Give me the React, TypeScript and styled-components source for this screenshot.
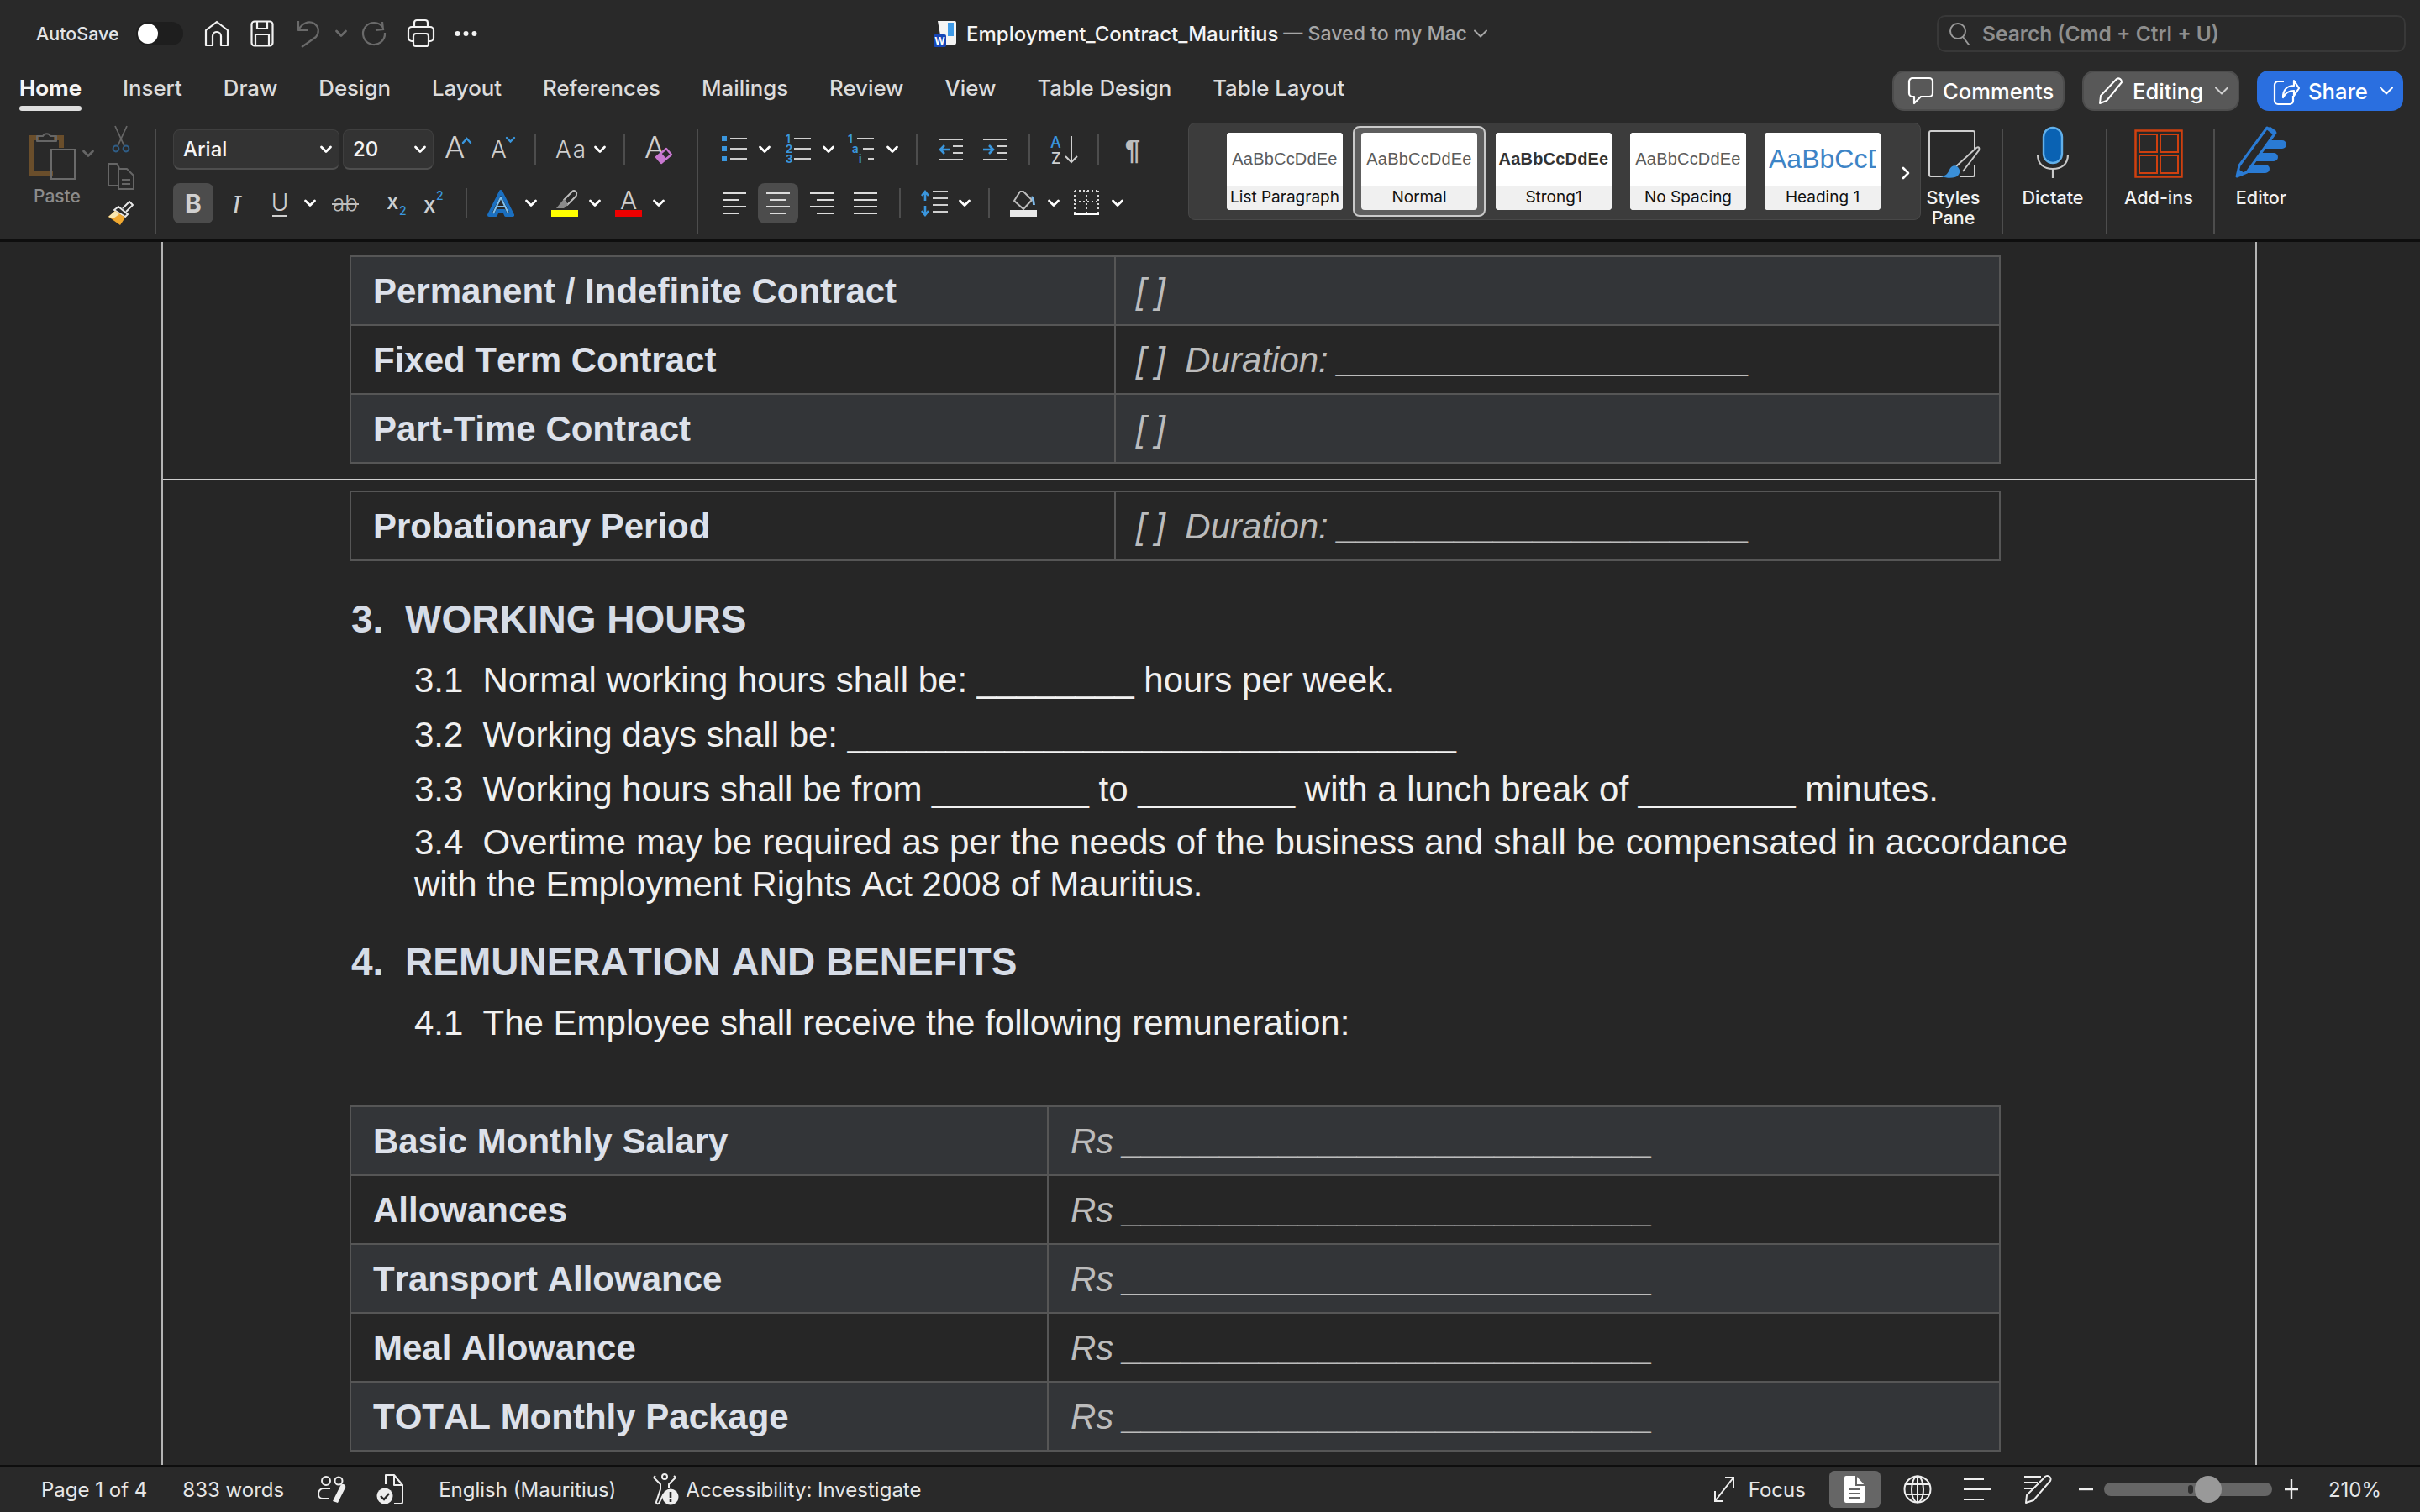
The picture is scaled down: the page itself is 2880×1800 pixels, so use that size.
import React from "react";
import styled, { createGlobalStyle } from "styled-components";

const Global = createGlobalStyle`
  html, body { margin: 0; padding: 0; background: #262626; width: 2880px; height: 1800px; overflow: hidden; }
  * { box-sizing: border-box; }
  #root { width: 2880px; height: 1800px; }
`;

const UI = `Inter, "Noto Sans", sans-serif`;
const DOC = `"Liberation Sans", Arial, sans-serif`;
const BLUE = "#3a96dd";
const ICON = "#cfcfcf";

const Shell = styled.div`
  width: 2880px; height: 1800px; display: flex; flex-direction: column;
  background: #262626; font-family: ${UI}; color: #f0f0f0; overflow: hidden;
`;
const Header = styled.header`
  height: 288px; flex: none; background: #292929; border-bottom: 4px solid #0e0e0e;
`;
const TitleBar = styled.div`
  height: 84px; display: flex; align-items: flex-start;
`;
const QuickBar = styled.div`
  width: 1111px; height: 80px; padding-left: 43px; display: flex; align-items: center; flex: none;
`;
const AutoSave = styled.span`
  font-size: 21.5px; font-weight: 500; color: #e4e4e4; width: 100px; white-space: nowrap;
`;
const Toggle = styled.span`
  width: 56px; height: 28px; margin-left: 19px; border-radius: 14px; background: #1e1e1e; position: relative; display: block; flex: none;
  &::before { content: ""; position: absolute; left: 2px; top: 2px; width: 24px; height: 24px; border-radius: 50%; background: #fff; }
`;
const Spot = styled.span<{ $ml?: number; $mt?: number }>`
  display: flex; align-items: center; justify-content: center; flex: none;
  margin-left: ${(p) => p.$ml ?? 0}px; margin-top: ${(p) => p.$mt ?? 0}px;
  align-self: ${(p) => (p.$mt ? "flex-start" : "auto")};
`;
const DocTitle = styled.div`
  height: 80px; width: 1194px; flex: none; display: flex; align-items: center;
`;
const TitleName = styled.span`
  margin-left: 11px; font-size: 24px; font-weight: 500; color: #f4f4f4; white-space: nowrap;
`;
const TitleState = styled.span`
  font-size: 23.1px; font-weight: 500; color: #a6a6a6; white-space: nowrap; margin-left: 6px;
`;
const Search = styled.div`
  width: 558px; height: 44px; margin-top: 18px; border: 2px solid #383838; border-radius: 10px;
  display: flex; align-items: center; padding-left: 12px; flex: none;
`;
const SearchText = styled.span`
  margin-left: 14px; font-size: 24.5px; font-weight: 600; color: #8e8e8e; white-space: nowrap;
`;
const TabBar = styled.div`
  height: 62px; display: flex; justify-content: space-between; padding: 0 20px 0 23px;
`;
const Tabs = styled.nav`
  display: flex; gap: 49px; align-items: flex-start;
`;
const Tab = styled.span<{ $on?: boolean }>`
  position: relative; flex: none; height: 48px; line-height: 42px; font-size: 25.8px; white-space: nowrap;
  font-weight: ${(p) => (p.$on ? 700 : 500)}; color: ${(p) => (p.$on ? "#f5f5f5" : "#dcdcdc")};
  &::after {
    content: ""; display: ${(p) => (p.$on ? "block" : "none")}; position: absolute; left: 0; right: 0; bottom: 0;
    height: 6px; border-radius: 3px; background: #dedede;
  }
`;
const Actions = styled.div`
  display: flex; gap: 21px; align-items: flex-start;
`;
const Action = styled.button<{ $w: number; $primary?: boolean }>`
  width: ${(p) => p.$w}px; height: 48px; border-radius: 14px; padding: 0 0 0 ${(p) => (p.$primary ? 17 : 16)}px;
  border: 2px solid ${(p) => (p.$primary ? "#2a6fe0" : "#4d4d4d")};
  background: ${(p) => (p.$primary ? "#2a6fe0" : "#585858")};
  color: #fff; font: 500 25.6px ${UI}; display: flex; align-items: center; gap: 10px; white-space: nowrap;
`;
const ActionLabel = styled.span`
  margin-right: 4px;
`;
const Ribbon = styled.div`
  height: 138px; display: flex; align-items: flex-start;
`;
const ClipGroup = styled.div`
  width: 184px; flex: none; height: 138px; display: flex; padding-left: 34px;
`;
const PasteCol = styled.div`
  width: 58px; display: flex; flex-direction: column; align-items: flex-start; flex: none; padding-top: 8px;
`;
const PasteLabel = styled.span`
  font-size: 21px; font-weight: 500; color: #8c8c8c; margin: 5px 0 0 6px; line-height: 26px;
`;
const ClipTools = styled.div`
  margin-left: 16px; display: flex; flex-direction: column; align-items: center; width: 32px; flex: none; padding-top: 4px; gap: 12px;
`;
const RibbonRule = styled.div<{ $ml?: number }>`
  width: 2px; height: 124px; margin-top: 8px; background: #4d4d4d; flex: none; margin-left: ${(p) => p.$ml ?? 0}px;
`;
const Group = styled.div<{ $w: number; $pl: number }>`
  width: ${(p) => p.$w}px; padding: 8px 0 0 ${(p) => p.$pl}px; flex: none; display: flex; flex-direction: column; gap: 16px;
`;
const ToolRow = styled.div`
  display: flex; height: 48px; align-items: center;
`;
const Select = styled.div<{ $w: number; $ml?: number }>`
  width: ${(p) => p.$w}px; height: 48px; margin-left: ${(p) => p.$ml ?? 0}px; border-radius: 8px; background: #333333; flex: none;
  border: 1px solid #3f3f3f; border-bottom: 2px solid #4e4e4e; display: flex; align-items: center; justify-content: space-between;
  padding: 0 8px 0 11px; font-size: 24px; font-weight: 500; color: #f5f5f5;
`;
const Slot = styled.div<{ $w: number }>`
  width: ${(p) => p.$w}px; height: 48px; display: flex; align-items: center; justify-content: center; flex: none;
`;
const Pressed = styled.div`
  width: 48px; height: 48px; border-radius: 8px; background: #4c4c4c; display: flex; align-items: center; justify-content: center;
`;
const MiniRule = styled.div`
  width: 2px; height: 36px; background: #4d4d4d;
`;
const Gallery = styled.div`
  width: 872px; height: 116px; flex: none; background: #3c3c3c; border: 1px solid #484848; border-radius: 8px;
  margin-left: 21px; padding: 11px 0 0 45px; display: flex; gap: 22px; align-items: flex-start;
`;
const StyleCard = styled.div<{ $on?: boolean }>`
  width: 138px; height: 92px; border-radius: 4px; background: #fff; position: relative; flex: none; overflow: visible;
  display: flex; flex-direction: column; color: #111;
  &::before {
    content: ""; display: ${(p) => (p.$on ? "block" : "none")}; position: absolute; left: -10px; right: -10px; top: -8px; bottom: -8px;
    border: 2px solid #c9c9c9; border-radius: 8px; background: #5e5e5e; z-index: 0;
  }
`;
const Preview = styled.div<{ $big?: boolean; $bold?: boolean }>`
  position: relative; z-index: 1; height: 64px; background: #fff; border-radius: 4px 4px 0 0; display: flex; align-items: center; overflow: hidden;
  padding: 0 ${(p) => (p.$big ? 5 : 0)}px 2px; text-align: ${(p) => (p.$big ? "left" : "center")};
  font-family: ${DOC}; white-space: nowrap;
  font-size: ${(p) => (p.$big ? 32 : 20)}px; letter-spacing: ${(p) => (p.$big ? 0 : 0.2)}px;
  font-weight: ${(p) => (p.$bold ? 700 : 400)}; color: ${(p) => (p.$big ? "#3d84c6" : p.$bold ? "#333" : "#5c5c5c")};
`;
const PreviewClip = styled.span`
  display: block; overflow: hidden; width: 100%;
`;
const StyleName = styled.div`
  position: relative; z-index: 1; height: 28px; padding-bottom: 4px; background: #f0f0f0; border-radius: 0 0 4px 4px; font-size: 19px; font-weight: 400;
  display: flex; align-items: center; justify-content: center; white-space: nowrap; color: #111;
`;
const GalleryMore = styled.span`
  margin: 40px 0 0 3px; display: block;
`;
const Tool = styled.div<{ $w: number }>`
  width: ${(p) => p.$w}px; flex: none; display: flex; flex-direction: column; align-items: center; padding-top: 6px;
`;
const ToolIcon = styled.div`
  height: 60px; display: flex; align-items: flex-end; justify-content: center;
`;
const ToolLabel = styled.div`
  margin-top: 11px; font-size: 21.6px; font-weight: 500; line-height: 24px; text-align: center; color: #f2f2f2;
`;

const DocArea = styled.main`
  flex: 1; min-height: 0; overflow: hidden; background: #262626;
`;
const Page = styled.article`
  margin-left: 192px; width: 2494px; height: 100%; border-left: 2px solid #b4b4b4; border-right: 2px solid #b4b4b4;
  font-family: ${DOC}; font-kerning: none; padding-top: 16px; overflow: hidden;
`;
const TableBox = styled.div<{ $mt?: number }>`
  margin: ${(p) => p.$mt ?? 0}px 0 0 222px; width: 1965px; border-top: 2px solid #565656; border-left: 2px solid #565656; border-right: 2px solid #565656;
`;
const Row = styled.div<{ $first: number; $shade?: boolean }>`
  display: grid; grid-template-columns: ${(p) => p.$first}px 1fr; height: 82px; border-bottom: 2px solid #565656;
  background: ${(p) => (p.$shade ? "#333538" : "#262626")}; align-items: stretch;
`;
const LabelCell = styled.div`
  border-right: 2px solid #565656; font-size: 42px; font-weight: 700; color: #dde1ea; padding: 2px 0 0 26px; display: flex; align-items: center;
  white-space: nowrap;
`;
const ValueCell = styled.div<{ $pl: number }>`
  font-size: 42px; font-style: italic; color: #bcbcbc; padding: 2px 0 0 ${(p) => p.$pl}px; display: flex; align-items: center; white-space: pre;
`;
const PageBreak = styled.div`
  height: 2px; background: #cfcfcf; margin: 18px 0 12px;
`;
const Heading = styled.h2<{ $mt: number }>`
  margin: ${(p) => p.$mt}px 0 0 224px; font-size: 46px; line-height: 52px; font-weight: 700; color: #d6dce6; white-space: nowrap;
`;
const HeadNum = styled.span`
  display: inline-block; width: 64px;
`;
const Para = styled.p<{ $mt: number }>`
  margin: ${(p) => p.$mt}px 0 0 299px; width: 1968px; font-size: 42px; line-height: 50px; color: #f0f0f0; text-align: justify;
`;
const ParaNum = styled.span`
  display: inline-block; width: 81.5px;
`;
const StatusBar = styled.footer`
  height: 56px; flex: none; background: #292929; border-top: 2px solid #0e0e0e; display: flex; align-items: center; font-size: 24px; color: #e6e6e6;
  padding-right: 46px;
`;
const StatusText = styled.span<{ $ml: number }>`
  margin-left: ${(p) => p.$ml}px; white-space: nowrap;
`;
const ViewBtn = styled.span`
  width: 61px; height: 44px; margin-left: 28px; background: #666; border-radius: 6px; display: flex; align-items: center; justify-content: center; flex: none;
`;
const Zoom = styled.div`
  margin-left: 13px; width: 200px; height: 16px; background: #666; border-radius: 8px; position: relative; flex: none;
`;
const ZoomTick = styled.span`
  position: absolute; left: 100px; top: 3px; width: 6px; height: 10px; border-radius: 3px; background: #2e2e2e;
`;
const ZoomThumb = styled.span`
  position: absolute; left: 108px; top: -8px; width: 32px; height: 32px; border-radius: 50%; background: #999;
`;
const StatusPush = styled.span`
  margin-left: auto;
`;

const Svg = ({ w, h, children }: { w: number; h: number; children: React.ReactNode }) => (
  <svg width={w} height={h} viewBox={`0 0 ${w} ${h}`} fill="none" style={{ display: "block", flex: "none", overflow: "visible" }}>
    {children}
  </svg>
);

const Chev = ({ c = "#fff" }: { c?: string }) => (
  <Svg w={14} h={10}>
    <path d="M1.5 2 7 7.5 12.5 2" stroke={c} strokeWidth="2.8" strokeLinecap="round" strokeLinejoin="round" />
  </Svg>
);
const RightChev = () => (
  <Svg w={10} h={16}>
    <path d="M2 2l6 6-6 6" stroke="#fff" strokeWidth="2.6" strokeLinecap="round" strokeLinejoin="round" />
  </Svg>
);
const ThinChev = ({ c = "#d0d0d0" }: { c?: string }) => (
  <Svg w={16} h={10}>
    <path d="M1 1.5 8 8.5l7-7" stroke={c} strokeWidth="2" strokeLinecap="round" strokeLinejoin="round" />
  </Svg>
);
const uiText = { fontFamily: "Inter, sans-serif" };

const HomeIcon = () => (
  <Svg w={30} h={32}>
    <path d="M2 30V12L15 2l13 10v18h-8V19a5 5 0 0 0-10 0v11z" stroke="#f2f2f2" strokeWidth="2.2" strokeLinejoin="round" />
  </Svg>
);
const SaveIcon = () => (
  <Svg w={28} h={32}>
    <rect x="1.5" y="1.5" width="25" height="29" rx="3.5" stroke="#f2f2f2" strokeWidth="2.2" />
    <path d="M8 2v8h12V2M6 30V17h16v13" stroke="#f2f2f2" strokeWidth="2.2" />
  </Svg>
);
const UndoIcon = () => (
  <Svg w={28} h={34}>
    <path d="M2 2v11h11M2 13C6 5 14 1 21 5c6 4 6 11 2 16L6 33" stroke="#6a6a6a" strokeWidth="2.2" strokeLinejoin="round" />
  </Svg>
);
const RedoIcon = () => (
  <Svg w={28} h={32}>
    <path d="M22 2l1 9-9 1M23 9a13 13 0 1 0 2 6" stroke="#6a6a6a" strokeWidth="2.2" />
  </Svg>
);
const PrintIcon = () => (
  <Svg w={32} h={34}>
    <path d="M8 10V4a3 3 0 0 1 3-3h10a3 3 0 0 1 3 3v6" stroke="#f2f2f2" strokeWidth="2.2" />
    <path d="M7 26H5a4 4 0 0 1-4-4V13a4 4 0 0 1 4-4h22a4 4 0 0 1 4 4v9a4 4 0 0 1-4 4h-2" stroke="#f2f2f2" strokeWidth="2.2" />
    <rect x="7" y="17" width="18" height="15" rx="3" stroke="#f2f2f2" strokeWidth="2.2" />
  </Svg>
);
const MoreIcon = () => (
  <Svg w={27} h={8}>
    <circle cx="3.5" cy="4" r="3" fill="#f2f2f2" />
    <circle cx="13.5" cy="4" r="3" fill="#f2f2f2" />
    <circle cx="23.5" cy="4" r="3" fill="#f2f2f2" />
  </Svg>
);
const WordIcon = () => (
  <Svg w={28} h={32}>
    <path d="M5 1h20a2 2 0 0 1 2 2v24a2 2 0 0 1-2 2H10" fill="#f4f4f4" />
    <path d="M17 3h7v16h-7z" fill="#3f9be8" />
    <rect x="0" y="17" width="15" height="15" rx="2" fill="#1747b8" />
    <text x="7.5" y="29" textAnchor="middle" fontSize="12" fontWeight="700" fill="#fff" style={uiText}>W</text>
  </Svg>
);
const SearchIcon = () => (
  <Svg w={26} h={28}>
    <circle cx="11" cy="11" r="9" stroke="#9a9a9a" strokeWidth="2" />
    <path d="M17 18l7 9" stroke="#9a9a9a" strokeWidth="2" strokeLinecap="round" />
  </Svg>
);
const CommentIcon = () => (
  <Svg w={32} h={34}>
    <path d="M6 2h20a4 4 0 0 1 4 4v14a4 4 0 0 1-4 4H16l-8 8v-8H6a4 4 0 0 1-4-4V6a4 4 0 0 1 4-4z" stroke="#fff" strokeWidth="2.2" strokeLinejoin="round" />
  </Svg>
);
const PenIcon = () => (
  <Svg w={32} h={34}>
    <path d="M23 3a4 4 0 0 1 6 4L11 29l-8 3 1-9z" stroke="#fff" strokeWidth="2" strokeLinejoin="round" />
  </Svg>
);
const ShareIcon = () => (
  <Svg w={32} h={36}>
    <path d="M13 7H6a4 4 0 0 0-4 4v19a4 4 0 0 0 4 4h14a4 4 0 0 0 4-4v-6" stroke="#fff" strokeWidth="2.2" />
    <path d="M12 26c0-9 5-14 13-14V6l6 9-6 9v-6c-6 0-10 2-13 8z" stroke="#fff" strokeWidth="2.2" strokeLinejoin="round" />
  </Svg>
);
const PasteIcon = () => (
  <Svg w={58} h={62}>
    <path d="M12 10H3v42h26" stroke="#6a4e2b" strokeWidth="6" />
    <path d="M30 10h9v12" stroke="#6a4e2b" strokeWidth="6" />
    <path d="M10 14V8h7a5 5 0 0 1 9 0h7v6z" stroke="#666" strokeWidth="2" strokeLinejoin="round" />
    <rect x="27" y="24" width="28" height="35" stroke="#6a6a6a" strokeWidth="2" />
  </Svg>
);
const ScissorsIcon = () => (
  <Svg w={22} h={32}>
    <path d="M4 0l11 24M18 0L7 24" stroke="#666" strokeWidth="1.8" />
    <circle cx="5" cy="27" r="3.4" stroke="#2f5d86" strokeWidth="2" />
    <circle cx="17" cy="27" r="3.4" stroke="#2f5d86" strokeWidth="2" />
  </Svg>
);
const CopyIcon = () => (
  <Svg w={32} h={32}>
    <path d="M13 27H1V1h10l3 5" stroke="#666" strokeWidth="2" />
    <path d="M13 7h10l8 8v16H13z" stroke="#666" strokeWidth="2" strokeLinejoin="round" />
    <path d="M17 20h10M17 25h10" stroke="#666" strokeWidth="2" />
  </Svg>
);
const BrushIcon = () => (
  <Svg w={32} h={30}>
    <path d="M18 10l8-8 4 4-8 8" stroke="#e8e8e8" strokeWidth="2" strokeLinejoin="round" />
    <path d="M13 8l11 9-3 3L8 12z" stroke="#e8e8e8" strokeWidth="2" fill="#2a2a2a" strokeLinejoin="round" />
    <path d="M9 13l12 8-6 9L1 20z" fill="#f0a830" />
    <path d="M1 20l8-7 5 4-7 5z" fill="#f8e6b0" />
  </Svg>
);
const GrowIcon = () => (
  <Svg w={30} h={36}>
    <text x="-1" y="28" fontSize="36" fontWeight="300" fill={ICON} style={uiText}>A</text>
    <path d="M21 10l4.5-5 4.5 5" stroke={BLUE} strokeWidth="2.4" strokeLinecap="round" />
  </Svg>
);
const ShrinkIcon = () => (
  <Svg w={27} h={36}>
    <text x="-1" y="28" fontSize="28" fontWeight="300" fill={ICON} style={uiText}>A</text>
    <path d="M18 4l4.5 4.5L27 4" stroke={BLUE} strokeWidth="2.4" strokeLinecap="round" />
  </Svg>
);
const CaseIcon = () => (
  <Svg w={34} h={36}>
    <text x="-1" y="28" fontSize="28" fontWeight="300" fill={ICON} style={uiText} letterSpacing="2">Aa</text>
  </Svg>
);
const ClearIcon = () => (
  <Svg w={32} h={36}>
    <text x="-1" y="28" fontSize="36" fontWeight="300" fill={ICON} style={uiText}>A</text>
    <path d="M13 27l12-10 6 7-12 10z" fill="#292929" stroke="#c878d0" strokeWidth="2.4" strokeLinejoin="round" />
    <path d="M13 27l6-5 6 7-6 5z" fill="#c878d0" />
  </Svg>
);
const BoldGlyph = styled.span`
  font-size: 30px; font-weight: 700; color: #d0d0d0;
`;
const ItalicGlyph = () => (
  <Svg w={20} h={34}>
    <text x="4" y="29" fontSize="32" fontStyle="italic" fontFamily="Liberation Serif, serif" fill={ICON}>I</text>
  </Svg>
);
const UnderIcon = () => (
  <Svg w={20} h={34}>
    <text x="10" y="26" textAnchor="middle" fontSize="28" fontWeight="300" fill={ICON} style={uiText}>U</text>
    <path d="M1 32h18" stroke={ICON} strokeWidth="2" />
  </Svg>
);
const StrikeIcon = () => (
  <Svg w={34} h={30}>
    <text x="17" y="24" textAnchor="middle" fontSize="26" fontWeight="300" fill="#bdbdbd" style={uiText}>ab</text>
    <path d="M1 16h32" stroke="#bdbdbd" strokeWidth="2" />
  </Svg>
);
const SubIcon = () => (
  <Svg w={24} h={30}>
    <text x="2" y="22" fontSize="26" fontWeight="500" fill={ICON} style={uiText}>x</text>
    <text x="17" y="29" fontSize="14" fontWeight="500" fill={BLUE} style={uiText}>2</text>
  </Svg>
);
const SupIcon = () => (
  <Svg w={24} h={30}>
    <text x="0" y="26" fontSize="26" fontWeight="500" fill={ICON} style={uiText}>x</text>
    <text x="15" y="11" fontSize="14" fontWeight="500" fill={BLUE} style={uiText}>2</text>
  </Svg>
);
const EffectIcon = () => (
  <Svg w={34} h={32}>
    <path d="M17 2 31 30H23l-2-5h-8l-2 5H3z" stroke="#1a6fc0" strokeWidth="4" strokeLinejoin="round" />
    <path d="M17 9 26 28M17 9 8 28M12 20h10" stroke="#7ec0ef" strokeWidth="2" />
  </Svg>
);
const MarkerIcon = () => (
  <Svg w={32} h={32}>
    <path d="M15 12 25 2a3 3 0 0 1 5 3 3 3 0 0 1-1 3L19 18z" stroke="#bdbdbd" strokeWidth="2" strokeLinejoin="round" />
    <path d="M15 11l5 7-5 4H6z" fill="#8a8a8a" />
    <rect y="24" width="32" height="8" fill="#ffff00" />
  </Svg>
);
const ColorIcon = () => (
  <Svg w={32} h={32}>
    <text x="16" y="23" textAnchor="middle" fontSize="30" fontWeight="300" fill={ICON} style={uiText}>A</text>
    <rect y="24" width="32" height="8" fill="#ee0000" />
  </Svg>
);
const BulletIcon = () => (
  <Svg w={30} h={32}>
    <rect x="0" y="0" width="6" height="6" fill={BLUE} />
    <rect x="0" y="12" width="6" height="6" fill={BLUE} />
    <rect x="0" y="24" width="6" height="6" fill={BLUE} />
    <path d="M10 3h20M10 15h20M10 27h20" stroke={ICON} strokeWidth="2" />
  </Svg>
);
const NumText = ({ x, y, t }: { x: number; y: number; t: string }) => (
  <text x={x} y={y} fontSize="13" fontWeight="700" fill={BLUE} style={uiText}>{t}</text>
);
const NumberIcon = () => (
  <Svg w={30} h={34}>
    <NumText x={0} y={9} t="1" />
    <NumText x={0} y={21} t="2" />
    <NumText x={0} y={33} t="3" />
    <path d="M10 4h20M10 16h20M10 28h20" stroke={ICON} strokeWidth="2" />
  </Svg>
);
const MultiIcon = () => (
  <Svg w={32} h={34}>
    <NumText x={0} y={9} t="1" />
    <NumText x={5} y={21} t="a" />
    <NumText x={13} y={33} t="i" />
    <path d="M11 4h20M18 16h13M24 28h7" stroke={ICON} strokeWidth="2" />
  </Svg>
);
const OutIcon = ({ flip }: { flip?: boolean }) => (
  <Svg w={28} h={26}>
    <path d="M0 1h28M16 9h12M16 17h12M0 25h28" stroke={ICON} strokeWidth="2" />
    <path d={flip ? "M0 13h11M7 8l5 5-5 5" : "M12 13H1M6 8l-5 5 5 5"} stroke={BLUE} strokeWidth="2.6" />
  </Svg>
);
const SortIcon = () => (
  <Svg w={32} h={34}>
    <text x="0" y="15" fontSize="18" fontWeight="500" fill={BLUE} style={uiText}>A</text>
    <text x="1" y="34" fontSize="18" fontWeight="500" fill={ICON} style={uiText}>Z</text>
    <path d="M25 1v31M18 25l7 7 7-7" stroke={ICON} strokeWidth="2" />
  </Svg>
);
const Pilcrow = styled.span`
  font-size: 33px; font-weight: 700; color: #bdbdbd; font-family: ${DOC}; line-height: 1;
`;
const AlignIcon = ({ kind }: { kind: "l" | "c" | "r" | "j" }) => {
  const short = { l: [0, 20], c: [4, 24], r: [8, 28], j: [0, 28] }[kind];
  return (
    <Svg w={28} h={26}>
      <path d={`M0 1h28M${short[0]} 9H${short[1]}M0 17h28M${short[0]} 25H${short[1]}`} stroke="#dcdcdc" strokeWidth="2" />
    </Svg>
  );
};
const SpacingIcon = () => (
  <Svg w={32} h={30}>
    <path d="M5 1v11M1 6l4-5 4 5M5 29V18M1 24l4 5 4-5" stroke={BLUE} strokeWidth="2.6" />
    <path d="M14 1h18M14 9h18M14 17h18M14 25h18" stroke={ICON} strokeWidth="2" />
  </Svg>
);
const ShadeIcon = () => (
  <Svg w={32} h={32}>
    <path d="M12 2h4l10 10-10 11L5 13z" stroke="#bdbdbd" strokeWidth="2" strokeLinejoin="round" fill="none" />
    <path d="M25 8c3-2 4 2 5 10h-3c0-4-1-6-2-10z" fill="#7db8e8" />
    <rect y="24" width="32" height="8" fill="#e8e8e8" />
  </Svg>
);
const BorderIcon = () => (
  <Svg w={30} h={32}>
    <path d="M1 1h28M1 14h28M1 1v26M15 1v26M29 1v26" stroke="#d8d8d8" strokeWidth="2" strokeDasharray="2 3" />
    <path d="M0 29h30" stroke="#fff" strokeWidth="2" />
  </Svg>
);
const PaneIcon = () => (
  <Svg w={62} h={60}>
    <path d="M56 28v-22a2 2 0 0 0-2-2H4a2 2 0 0 0-2 2v50a2 2 0 0 0 2 2h14M38 58h16a2 2 0 0 0 2-2V44" stroke="#cfcfcf" strokeWidth="2" />
    <path d="M34 46 58 24c3-2 4 0 3 3L42 52" stroke="#c8c8c8" strokeWidth="2" fill="#292929" />
    <path d="M15 58c6 0 9-3 11-8s7-6 10-3 3 7 0 10-10 4-21 1z" fill="#3a8fd8" />
  </Svg>
);
const MicIcon = () => (
  <Svg w={38} h={62}>
    <rect x="8" y="2" width="22" height="42" rx="11" fill="#0a62b3" stroke="#62b0ea" strokeWidth="2.4" />
    <path d="M1 34c0 12 8 17 18 17s18-5 18-17M19 51v11" stroke="#c8c8c8" strokeWidth="2.2" />
  </Svg>
);
const AddinIcon = () => (
  <Svg w={58} h={58}>
    <rect x="1.5" y="1.5" width="55" height="55" stroke="#d0400f" strokeWidth="2.5" />
    <rect x="6" y="6" width="21" height="21" stroke="#d0400f" strokeWidth="2" />
    <rect x="31" y="6" width="21" height="21" stroke="#d0400f" strokeWidth="2" />
    <rect x="6" y="31" width="21" height="21" stroke="#d0400f" strokeWidth="2" />
    <rect x="31" y="31" width="21" height="21" stroke="#d0400f" strokeWidth="2" />
  </Svg>
);
const EditorIcon = () => (
  <Svg w={62} h={62}>
    <path d="M39 17H56a5 5 0 0 1 0 10H31zM29 32H46a5 5 0 0 1 0 10H21zM18 46H36a5 5 0 0 1 0 10H12z" fill="#2a7bd4" />
    <path d="M38 2 48 8 14 55 2 60l3-13z" fill="#292929" stroke="#2a7bd4" strokeWidth="3" strokeLinejoin="round" />
    <path d="M36 3l6-2 7 5-3 5z" fill="#2a7bd4" />
    <path d="M2 60l3-8 6 4z" fill="#2a7bd4" />
  </Svg>
);
const ReviewersIcon = () => (
  <Svg w={36} h={34}>
    <circle cx="11" cy="7" r="5" stroke="#eee" strokeWidth="2" />
    <circle cx="26" cy="7" r="4.5" stroke="#eee" strokeWidth="2" />
    <path d="M16 16H8a6 6 0 0 0-6 6v1a5 5 0 0 0 5 5h7" stroke="#eee" strokeWidth="2" />
    <path d="M28 13a3 3 0 0 1 6 2L25 33l-6-2z" fill="#eee" />
  </Svg>
);
const ProofIcon = () => (
  <Svg w={32} h={38}>
    <path d="M11 13V2h10l10 12v20a2 2 0 0 1-2 2h-8M21 2v12h10" stroke="#eee" strokeWidth="2" strokeLinejoin="round" />
    <circle cx="10" cy="27" r="9.5" fill="#eee" />
    <path d="M5 27l4 4 6-7" stroke="#292929" strokeWidth="2.4" />
  </Svg>
);
const AccessIcon = () => (
  <Svg w={32} h={38}>
    <circle cx="15" cy="4" r="3" stroke="#eee" strokeWidth="2" />
    <path d="M2 5l8 8v6L5 34a2 2 0 0 0 3 2l6-12M28 5l-8 8v4M2 5l2-2M28 5l-2-2" stroke="#eee" strokeWidth="2" strokeLinejoin="round" />
    <circle cx="22" cy="28" r="9.5" fill="#eee" />
    <path d="M22 22v7M22 31v3" stroke="#292929" strokeWidth="2.6" />
  </Svg>
);
const FocusIcon = () => (
  <Svg w={26} h={32}>
    <path d="M2 30 24 2M14 2h10v12M2 18v12h10" stroke="#eee" strokeWidth="2" />
  </Svg>
);
const PageIcon = () => (
  <Svg w={24} h={32}>
    <path d="M2 0h12l10 11v19a2 2 0 0 1-2 2H2a2 2 0 0 1-2-2V2a2 2 0 0 1 2-2z" fill="#fff" />
    <path d="M14 0v11h10" stroke="#666" strokeWidth="2" />
    <path d="M5 16h14M5 21h14M5 26h14" stroke="#666" strokeWidth="2.2" />
  </Svg>
);
const GlobeIcon = () => (
  <Svg w={34} h={34}>
    <circle cx="17" cy="17" r="15.5" stroke="#eee" strokeWidth="2" />
    <ellipse cx="17" cy="17" rx="7" ry="15.5" stroke="#eee" strokeWidth="2" />
    <path d="M17 1v32M2 11h30M2 23h30" stroke="#eee" strokeWidth="2" />
  </Svg>
);
const DraftIcon = () => (
  <Svg w={32} h={26}>
    <path d="M0 1h24M0 13h32M0 25h24" stroke="#eee" strokeWidth="2" />
  </Svg>
);
const OutlinePenIcon = () => (
  <Svg w={32} h={34}>
    <path d="M0 2h20M0 9h16M0 16h12" stroke="#eee" strokeWidth="2" />
    <path d="M24 3a4 4 0 0 1 7 4L11 30l-9 3 1-9z" stroke="#eee" strokeWidth="2" strokeLinejoin="round" />
  </Svg>
);
const MinusIcon = () => (
  <Svg w={17} h={4}>
    <path d="M0 2h17" stroke="#eee" strokeWidth="2.4" />
  </Svg>
);
const PlusIcon = () => (
  <Svg w={16} h={28}>
    <path d="M0 14h16M8 2v24" stroke="#eee" strokeWidth="2.4" />
  </Svg>
);

const tabs = ["Insert", "Draw", "Design", "Layout", "References", "Mailings", "Review", "View", "Table Design", "Table Layout"];
const styleCards = [
  { name: "List Paragraph", text: "AaBbCcDdEe" },
  { name: "Normal", text: "AaBbCcDdEe", on: true },
  { name: "Strong1", text: "AaBbCcDdEe", bold: true },
  { name: "No Spacing", text: "AaBbCcDdEe" },
  { name: "Heading 1", text: "AaBbCcDdEe", big: true },
];
const line = (n: number) => "_".repeat(n);

export default function App() {
  return (
    <Shell>
      <Global />
      <Header>
        <TitleBar>
          <QuickBar>
            <AutoSave>AutoSave</AutoSave>
            <Toggle />
            <Spot $ml={25}><HomeIcon /></Spot>
            <Spot $ml={25}><SaveIcon /></Spot>
            <Spot $ml={27}><UndoIcon /></Spot>
            <Spot $ml={18}><Chev c="#6a6a6a" /></Spot>
            <Spot $ml={20}><RedoIcon /></Spot>
            <Spot $ml={24}><PrintIcon /></Spot>
            <Spot $ml={24}><MoreIcon /></Spot>
          </QuickBar>
          <DocTitle>
            <WordIcon />
            <TitleName>Employment_Contract_Mauritius</TitleName>
            <TitleState>— Saved to my Mac</TitleState>
            <Spot $ml={8}><ThinChev c="#a6a6a6" /></Spot>
          </DocTitle>
          <Search>
            <SearchIcon />
            <SearchText>Search (Cmd + Ctrl + U)</SearchText>
          </Search>
        </TitleBar>
        <TabBar>
          <Tabs>
            <Tab $on>Home</Tab>
            {tabs.map((t) => <Tab key={t}>{t}</Tab>)}
          </Tabs>
          <Actions>
            <Action $w={205}><CommentIcon />Comments</Action>
            <Action $w={187}><PenIcon /><ActionLabel>Editing</ActionLabel><ThinChev /></Action>
            <Action $w={174} $primary><ShareIcon /><ActionLabel>Share</ActionLabel><ThinChev c="#fff" /></Action>
          </Actions>
        </TabBar>
        <Ribbon>
          <ClipGroup>
            <PasteCol>
              <PasteIcon />
              <PasteLabel>Paste</PasteLabel>
            </PasteCol>
            <Spot $ml={6} $mt={32}><Chev c="#666" /></Spot>
            <ClipTools>
              <ScissorsIcon />
              <CopyIcon />
              <BrushIcon />
            </ClipTools>
          </ClipGroup>
          <RibbonRule />
          <Group $w={643} $pl={20}>
            <ToolRow>
              <Select $w={198}>Arial<Chev /></Select>
              <Select $w={108} $ml={4}>20<Chev /></Select>
              <Slot $w={58}><GrowIcon /></Slot>
              <Slot $w={48}><ShrinkIcon /></Slot>
              <Slot $w={30}><MiniRule /></Slot>
              <Slot $w={54}><CaseIcon /></Slot>
              <Slot $w={16}><Chev /></Slot>
              <Slot $w={42}><MiniRule /></Slot>
              <Slot $w={40}><ClearIcon /></Slot>
            </ToolRow>
            <ToolRow>
              <Slot $w={48}><Pressed><BoldGlyph>B</BoldGlyph></Pressed></Slot>
              <Slot $w={56}><ItalicGlyph /></Slot>
              <Slot $w={46}><UnderIcon /></Slot>
              <Slot $w={26}><Chev /></Slot>
              <Slot $w={58}><StrikeIcon /></Slot>
              <Slot $w={60}><SubIcon /></Slot>
              <Slot $w={32}><SupIcon /></Slot>
              <Slot $w={46}><MiniRule /></Slot>
              <Slot $w={36}><EffectIcon /></Slot>
              <Slot $w={36}><Chev /></Slot>
              <Slot $w={44}><MarkerIcon /></Slot>
              <Slot $w={28}><Chev /></Slot>
              <Slot $w={52}><ColorIcon /></Slot>
              <Slot $w={20}><Chev /></Slot>
            </ToolRow>
          </Group>
          <RibbonRule />
          <Group $w={562} $pl={19}>
            <ToolRow>
              <Slot $w={48}><BulletIcon /></Slot>
              <Slot $w={24}><Chev /></Slot>
              <Slot $w={56}><NumberIcon /></Slot>
              <Slot $w={16}><Chev /></Slot>
              <Slot $w={62}><MultiIcon /></Slot>
              <Slot $w={12}><Chev /></Slot>
              <Slot $w={46}><MiniRule /></Slot>
              <Slot $w={36}><OutIcon /></Slot>
              <Slot $w={68}><OutIcon flip /></Slot>
              <Slot $w={14}><MiniRule /></Slot>
              <Slot $w={68}><SortIcon /></Slot>
              <Slot $w={14}><MiniRule /></Slot>
              <Slot $w={68}><Pilcrow>¶</Pilcrow></Slot>
            </ToolRow>
            <ToolRow>
              <Slot $w={48}><AlignIcon kind="l" /></Slot>
              <Slot $w={56}><Pressed><AlignIcon kind="c" /></Pressed></Slot>
              <Slot $w={48}><AlignIcon kind="r" /></Slot>
              <Slot $w={56}><AlignIcon kind="j" /></Slot>
              <Slot $w={26}><MiniRule /></Slot>
              <Slot $w={56}><SpacingIcon /></Slot>
              <Slot $w={16}><Chev /></Slot>
              <Slot $w={42}><MiniRule /></Slot>
              <Slot $w={40}><ShadeIcon /></Slot>
              <Slot $w={32}><Chev /></Slot>
              <Slot $w={46}><BorderIcon /></Slot>
              <Slot $w={28}><Chev /></Slot>
            </ToolRow>
          </Group>
          <Gallery>
            {styleCards.map((s) => (
              <StyleCard key={s.name} $on={s.on}>
                <Preview $big={s.big} $bold={s.bold}><PreviewClip>{s.text}</PreviewClip></Preview>
                <StyleName>{s.name}</StyleName>
              </StyleCard>
            ))}
            <GalleryMore><RightChev /></GalleryMore>
          </Gallery>
          <Tool $w={77}>
            <ToolIcon><PaneIcon /></ToolIcon>
            <ToolLabel>Styles<br />Pane</ToolLabel>
          </Tool>
          <RibbonRule $ml={19} />
          <Tool $w={118}>
            <ToolIcon><MicIcon /></ToolIcon>
            <ToolLabel>Dictate</ToolLabel>
          </Tool>
          <RibbonRule $ml={4} />
          <Tool $w={122}>
            <ToolIcon><AddinIcon /></ToolIcon>
            <ToolLabel>Add-ins</ToolLabel>
          </Tool>
          <RibbonRule $ml={4} />
          <Tool $w={110}>
            <ToolIcon><EditorIcon /></ToolIcon>
            <ToolLabel>Editor</ToolLabel>
          </Tool>
        </Ribbon>
      </Header>
      <DocArea>
        <Page>
          <TableBox>
            <Row $first={910} $shade>
              <LabelCell>Permanent / Indefinite Contract</LabelCell>
              <ValueCell $pl={24}>[ ]</ValueCell>
            </Row>
            <Row $first={910}>
              <LabelCell>Fixed Term Contract</LabelCell>
              <ValueCell $pl={24}>{`[ ]  Duration: ${line(21)}`}</ValueCell>
            </Row>
            <Row $first={910} $shade>
              <LabelCell>Part-Time Contract</LabelCell>
              <ValueCell $pl={24}>[ ]</ValueCell>
            </Row>
          </TableBox>
          <PageBreak />
          <TableBox>
            <Row $first={910}>
              <LabelCell>Probationary Period</LabelCell>
              <ValueCell $pl={24}>{`[ ]  Duration: ${line(21)}`}</ValueCell>
            </Row>
          </TableBox>
          <Heading $mt={43}><HeadNum>3.</HeadNum>WORKING HOURS</Heading>
          <Para $mt={22}><ParaNum>3.1</ParaNum>Normal working hours shall be: {line(8)} hours per week.</Para>
          <Para $mt={15}><ParaNum>3.2</ParaNum>Working days shall be: {line(31)}</Para>
          <Para $mt={15}><ParaNum>3.3</ParaNum>Working hours shall be from {line(8)} to {line(8)} with a lunch break of {line(8)} minutes.</Para>
          <Para $mt={13}><ParaNum>3.4</ParaNum>Overtime may be required as per the needs of the business and shall be compensated in accordance with the Employment Rights Act 2008 of Mauritius.</Para>
          <Heading $mt={41}><HeadNum>4.</HeadNum>REMUNERATION AND BENEFITS</Heading>
          <Para $mt={22}><ParaNum>4.1</ParaNum>The Employee shall receive the following remuneration:</Para>
          <TableBox $mt={73}>
            {["Basic Monthly Salary", "Allowances", "Transport Allowance", "Meal Allowance", "TOTAL Monthly Package"].map((t, i) => (
              <Row key={t} $first={830} $shade={i % 2 === 0}>
                <LabelCell>{t}</LabelCell>
                <ValueCell $pl={26}>{`Rs ${line(27)}`}</ValueCell>
              </Row>
            ))}
          </TableBox>
        </Page>
      </DocArea>
      <StatusBar>
        <StatusText $ml={49}>Page 1 of 4</StatusText>
        <StatusText $ml={42}>833 words</StatusText>
        <Spot $ml={39}><ReviewersIcon /></Spot>
        <Spot $ml={35}><ProofIcon /></Spot>
        <StatusText $ml={42}>English (Mauritius)</StatusText>
        <Spot $ml={43}><AccessIcon /></Spot>
        <StatusText $ml={8}>Accessibility: Investigate</StatusText>
        <StatusPush />
        <Spot><FocusIcon /></Spot>
        <StatusText $ml={16}>Focus</StatusText>
        <ViewBtn><PageIcon /></ViewBtn>
        <Spot $ml={27}><GlobeIcon /></Spot>
        <Spot $ml={38}><DraftIcon /></Spot>
        <Spot $ml={40}><OutlinePenIcon /></Spot>
        <Spot $ml={33}><MinusIcon /></Spot>
        <Zoom><ZoomTick /><ZoomThumb /></Zoom>
        <Spot $ml={15}><PlusIcon /></Spot>
        <StatusText $ml={36}>210%</StatusText>
      </StatusBar>
    </Shell>
  );
}
